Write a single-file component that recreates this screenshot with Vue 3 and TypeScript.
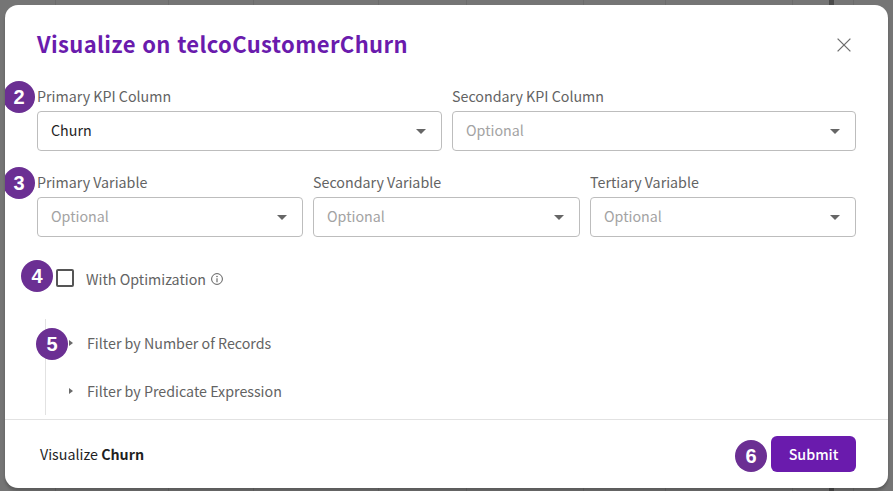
<script setup lang="ts">
const kpis = [
  { label: 'Primary KPI Column', value: 'Churn', filled: true },
  { label: 'Secondary KPI Column', value: 'Optional', filled: false },
]
const variables = [
  { label: 'Primary Variable', value: 'Optional', filled: false },
  { label: 'Secondary Variable', value: 'Optional', filled: false },
  { label: 'Tertiary Variable', value: 'Optional', filled: false },
]
</script>

<template>
  <div class="backdrop">
    <section class="modal">
      <header class="head">
        <h1>Visualize on telcoCustomerChurn</h1>
        <svg class="close" width="14" height="14" viewBox="0 0 14 14">
          <path d="M.6.6 13.4 13.4M13.4.6.6 13.4" stroke="#6f6f6f" stroke-width="1.3" fill="none" />
        </svg>
      </header>

      <div class="body">
        <div class="row two">
          <span class="badge b2">2</span>
          <label v-for="f in kpis" :key="f.label" class="field">
            <span class="label">{{ f.label }}</span>
            <span class="select">
              <span :class="f.filled ? 'val' : 'ph'">{{ f.value }}</span>
              <i class="caret"></i>
            </span>
          </label>
        </div>

        <div class="row three">
          <span class="badge b3">3</span>
          <label v-for="f in variables" :key="f.label" class="field">
            <span class="label">{{ f.label }}</span>
            <span class="select">
              <span class="ph">{{ f.value }}</span>
              <i class="caret"></i>
            </span>
          </label>
        </div>

        <div class="check">
          <span class="badge b4">4</span>
          <span class="box"></span>
          <span class="check-label">With Optimization</span>
          <svg class="info" width="12" height="12" viewBox="0 0 12 12">
            <circle cx="6" cy="6" r="5.4" fill="none" stroke="#5f5f5f" stroke-width="1" />
            <path d="M6 5.2V9.2" stroke="#5f5f5f" stroke-width="1.1" />
            <circle cx="6" cy="3.4" r=".75" fill="#5f5f5f" />
          </svg>
        </div>

        <div class="filters">
          <span class="badge b5">5</span>
          <div class="filter"><i class="tri"></i>Filter by Number of Records</div>
          <div class="filter"><i class="tri"></i>Filter by Predicate Expression</div>
        </div>
      </div>

      <footer class="foot">
        <span class="summary">Visualize <b>Churn</b></span>
        <div class="actions">
          <span class="badge b6">6</span>
          <button type="button" class="submit">Submit</button>
        </div>
      </footer>
    </section>
  </div>
</template>

<style>
html, body { margin: 0; background: #757575; }
</style>

<style scoped>
.backdrop {
  width: 893px;
  height: 491px;
  box-sizing: border-box;
  padding: 5px;
  overflow: hidden;
  background-color: #757575;
  background-image:
    linear-gradient(#6b6b6b, #6b6b6b), linear-gradient(#6b6b6b, #6b6b6b),
    linear-gradient(#6b6b6b, #6b6b6b), linear-gradient(#6b6b6b, #6b6b6b),
    linear-gradient(#6b6b6b, #6b6b6b), linear-gradient(#6b6b6b, #6b6b6b),
    linear-gradient(#6b6b6b, #6b6b6b), linear-gradient(#6b6b6b, #6b6b6b),
    linear-gradient(#6b6b6b, #6b6b6b), linear-gradient(#4a4a4a, #4a4a4a);
  background-size: 1px 100%, 1px 100%, 1px 100%, 1px 100%, 1px 100%, 1px 100%, 1px 100%, 1px 100%, 1px 100%, 5px 100%;
  background-position: 55px 0, 168px 0, 253px 0, 378px 0, 466px 0, 583px 0, 665px 0, 792px 0, 853px 0, 829px 0;
  background-repeat: no-repeat;
  font-family: "Noto Sans CJK SC", "Noto Sans", sans-serif;
}
.modal {
  width: 883px;
  height: 483px;
  background: #fff;
  border-radius: 13px;
  box-shadow: 0 3px 3px rgba(0, 0, 0, 0.22);
  display: flex;
  flex-direction: column;
  overflow: hidden;
}
.head {
  height: 82px;
  flex: none;
  box-sizing: border-box;
  padding: 22px 37px 0 32px;
  display: flex;
  justify-content: space-between;
  align-items: flex-start;
}
h1 {
  margin: 0;
  font-size: 22px;
  line-height: 32px;
  font-weight: 700;
  color: #6a1bad;
  letter-spacing: 0.36px;
  word-spacing: 1px;
}
.close { margin-top: 11px; }
.body {
  flex: 1;
  box-sizing: border-box;
  padding: 0 32px;
}
.row {
  position: relative;
  display: grid;
  gap: 10px;
}
.two { grid-template-columns: 405px 404px; margin-bottom: 22px; }
.three { grid-template-columns: 266px 267px 266px; }
.field { display: flex; flex-direction: column; }
.label {
  font-size: 14.25px;
  line-height: 18px;
  color: #636363;
  margin-bottom: 6px;
}
.select {
  height: 40px;
  box-sizing: border-box;
  border: 1px solid #bdbdbd;
  border-radius: 4px;
  padding: 0 13px 3px;
  display: flex;
  align-items: center;
  justify-content: space-between;
  font-size: 14.25px;
}
.val { color: #1f1f1f; }
.ph { color: #a3a3a3; }
.caret {
  width: 0;
  height: 0;
  border-left: 5px solid transparent;
  border-right: 5px solid transparent;
  border-top: 5px solid #666;
  margin: 3px 2px 0 0;
}
.badge {
  position: absolute;
  width: 32px;
  height: 32px;
  border-radius: 50%;
  background: #6b2f93;
  color: #fff;
  font: 700 20px/32px "Liberation Sans", sans-serif;
  text-align: center;
}
.b2 { left: -34px; top: -6px; }
.b3 { left: -34px; top: -6px; }
.check {
  position: relative;
  display: flex;
  align-items: center;
  height: 32px;
  margin: 23px 0 0 19px;
}
.b4 { left: -35px; top: 0; }
.box {
  width: 14px;
  height: 14px;
  border: 2px solid #555;
  border-radius: 2px;
  margin: 4px 12px 0 0;
}
.check-label { font-size: 14.25px; color: #636363; margin-top: 5px; }
.info { margin: 5px 0 0 5px; }
.filters {
  position: relative;
  margin: 27px 0 0 8px;
  height: 96px;
  border-left: 1px solid #e2e2e2;
  padding-left: 22px;
  box-sizing: border-box;
}
.b5 { left: -10px; top: 9px; }
.filter {
  position: relative;
  height: 48px;
  box-sizing: border-box;
  display: flex;
  align-items: center;
  padding: 0 0 2px 19px;
  font-size: 14.25px;
  color: #636363;
}
.tri {
  position: absolute;
  left: 1px;
  top: 20.5px;
  width: 0;
  height: 0;
  border-top: 3.5px solid transparent;
  border-bottom: 3.5px solid transparent;
  border-left: 4px solid #6a6a6a;
}
.foot {
  height: 69px;
  flex: none;
  box-sizing: border-box;
  border-top: 1px solid #e2e2e2;
  padding: 0 32px 0 35px;
  display: flex;
  align-items: center;
  justify-content: space-between;
}
.summary { font-size: 14.25px; color: #1f1f1f; margin-bottom: 2px; }
.summary b { font-weight: 700; }
.actions { position: relative; }
.b6 { left: -36px; top: 4px; }
.submit {
  display: block;
  width: 85px;
  height: 36px;
  border: 0;
  border-radius: 6px;
  padding: 0 0 2px;
  background: #6a1bad;
  color: #fff;
  font: 500 14.25px "Noto Sans CJK SC", sans-serif;
}
</style>
